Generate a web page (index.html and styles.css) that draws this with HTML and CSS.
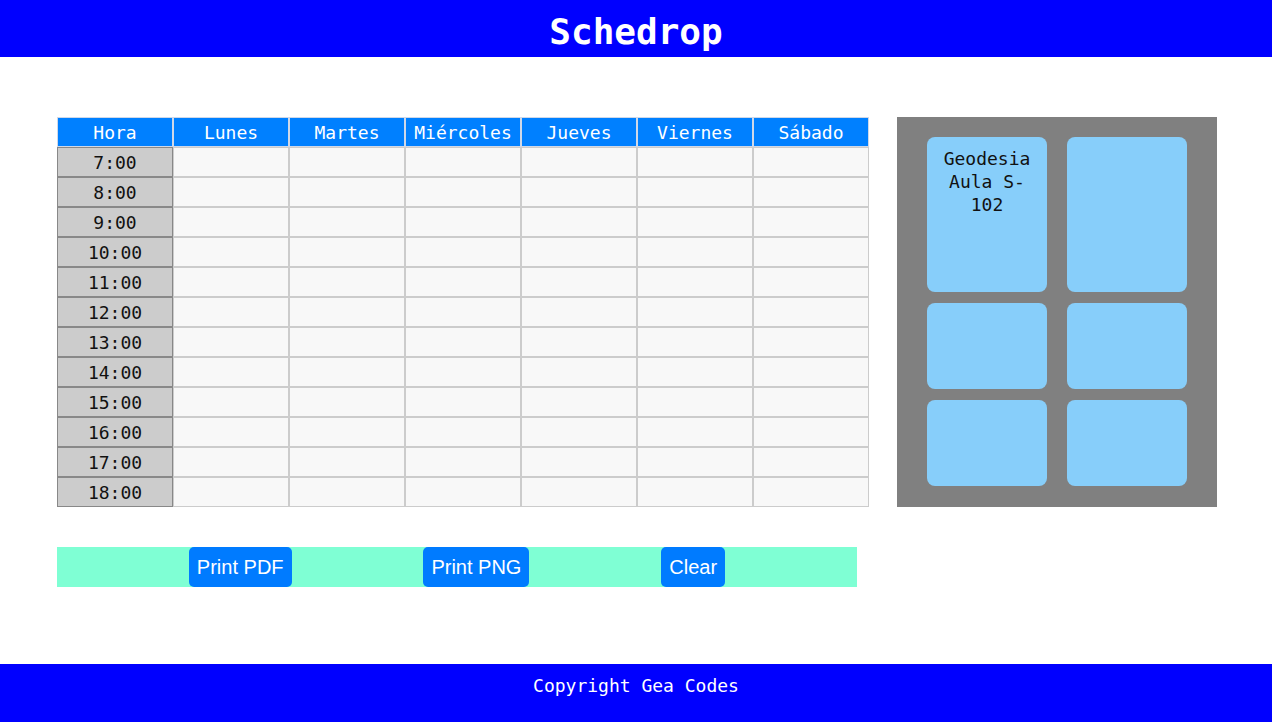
FILE: index.html
```html
<!DOCTYPE html>
<html lang="es">
<head>
<meta charset="utf-8">
<title>Schedrop</title>
<link rel="stylesheet" href="styles.css">
</head>
<body>
<header class="top"><h1 class="title">Schedrop</h1></header>
<main class="main">
  <div class="left">
    <table class="sched">
      <thead>
        <tr><th>Hora</th><th>Lunes</th><th>Martes</th><th>Miércoles</th><th>Jueves</th><th>Viernes</th><th>Sábado</th></tr>
      </thead>
      <tbody>
        <tr><td class="hr">7:00</td><td></td><td></td><td></td><td></td><td></td><td></td></tr>
        <tr><td class="hr">8:00</td><td></td><td></td><td></td><td></td><td></td><td></td></tr>
        <tr><td class="hr">9:00</td><td></td><td></td><td></td><td></td><td></td><td></td></tr>
        <tr><td class="hr">10:00</td><td></td><td></td><td></td><td></td><td></td><td></td></tr>
        <tr><td class="hr">11:00</td><td></td><td></td><td></td><td></td><td></td><td></td></tr>
        <tr><td class="hr">12:00</td><td></td><td></td><td></td><td></td><td></td><td></td></tr>
        <tr><td class="hr">13:00</td><td></td><td></td><td></td><td></td><td></td><td></td></tr>
        <tr><td class="hr">14:00</td><td></td><td></td><td></td><td></td><td></td><td></td></tr>
        <tr><td class="hr">15:00</td><td></td><td></td><td></td><td></td><td></td><td></td></tr>
        <tr><td class="hr">16:00</td><td></td><td></td><td></td><td></td><td></td><td></td></tr>
        <tr><td class="hr">17:00</td><td></td><td></td><td></td><td></td><td></td><td></td></tr>
        <tr><td class="hr">18:00</td><td></td><td></td><td></td><td></td><td></td><td></td></tr>
      </tbody>
    </table>
    <div class="actions">
      <button class="btn">Print PDF</button>
      <button class="btn">Print PNG</button>
      <button class="btn">Clear</button>
    </div>
  </div>
  <aside class="pool">
    <div class="card card-tall">Geodesia<br>Aula S-<br>102</div>
    <div class="card card-tall"></div>
    <div class="card"></div>
    <div class="card"></div>
    <div class="card"></div>
    <div class="card"></div>
  </aside>
</main>
<footer class="foot">Copyright Gea Codes</footer>
</body>
</html>
```

FILE: styles.css
```css
* { box-sizing: border-box; }
html, body { margin: 0; padding: 0; }
body {
  min-height: 100vh;
  display: flex;
  flex-direction: column;
  font-family: "DejaVu Sans Mono", "Liberation Mono", monospace;
  background: #ffffff;
  color: #000;
}
.top {
  height: 57px;
  background: #0000ff;
  display: flex;
  align-items: center;
  justify-content: center;
}
.title {
  margin: 0;
  color: #fff;
  font-size: 36px;
  font-weight: bold;
  line-height: 1;
  padding-top: 6px;
}
.main {
  display: flex;
  align-items: flex-start;
  gap: 28px;
  padding: 60px 0 0 57px;
}
.left {
  display: flex;
  flex-direction: column;
  gap: 40px;
}
.sched {
  width: 812px;
  table-layout: fixed;
  border-collapse: separate;
  border-spacing: 0;
}
.sched th, .sched td {
  width: 116px;
  height: 30px;
  padding: 1px 0 0 0;
  text-align: center;
  font-size: 18px;
  font-weight: normal;
  line-height: 27px;
}
.sched th {
  background: #0080ff;
  color: #fff;
  border: 1px solid #cfd8e8;
}
.sched td {
  background: #f8f8f8;
  border: 1px solid #cccccc;
}
.sched td.hr {
  background: #cccccc;
  border: 1px solid #888888;
  color: #111;
}
.actions {
  width: 800px;
  height: 40px;
  background: #7fffd4;
  display: flex;
  justify-content: space-evenly;
  align-items: stretch;
}
.btn {
  font-family: "Liberation Sans", Arial, sans-serif;
  font-size: 20px;
  color: #fff;
  background: #007bff;
  border: none;
  border-radius: 5px;
  padding: 0 8px;
  height: 40px;
}
.pool {
  width: 320px;
  height: 390px;
  background: #808080;
  padding: 20px 30px;
  display: grid;
  grid-template-columns: 120px 120px;
  grid-template-rows: 155px 86px 86px;
  column-gap: 20px;
  row-gap: 11px;
}
.card {
  background: #87cefa;
  border-radius: 8px;
  text-align: center;
  font-size: 18px;
  line-height: 23px;
  padding-top: 10px;
  color: #111;
}
.foot {
  margin-top: auto;
  height: 58px;
  background: #0000ff;
  color: #fff;
  text-align: center;
  font-size: 18px;
  padding-top: 11px;
  line-height: 22px;
}
```
